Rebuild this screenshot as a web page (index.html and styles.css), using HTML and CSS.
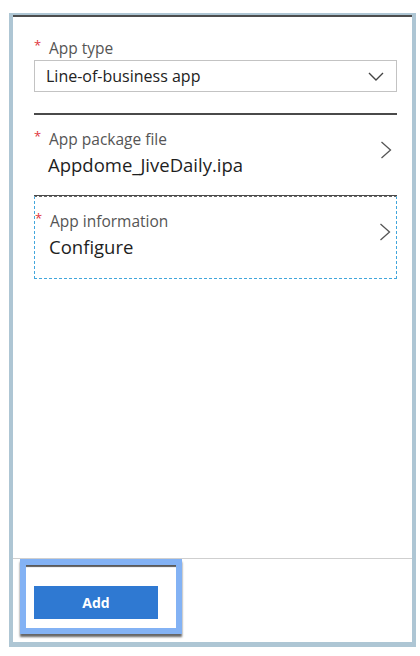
FILE: index.html
```html
<!DOCTYPE html>
<html lang="en">
<head>
    <meta charset="UTF-8">
    <title>Add app</title>
    <link rel="stylesheet" href="styles.css">
</head>
<body>
    <div class="frame">
        <div class="panel">
            <div class="form">
                <div class="field">
                    <label class="label"><span class="req">*</span>App type</label>
                    <div class="select">
                        <span>Line-of-business app</span>
                        <svg class="caret" width="16" height="9" viewBox="0 0 16 9"><path d="M1 1l7 7 7-7" fill="none" stroke="#444" stroke-width="1.4"/></svg>
                    </div>
                </div>

                <div class="item first">
                    <div class="item-text">
                        <div class="label"><span class="req">*</span>App package file</div>
                        <div class="value">Appdome_JiveDaily.ipa</div>
                    </div>
                    <svg class="chev" width="12" height="18" viewBox="0 0 12 18"><path d="M1.5 1l9 8-9 8" fill="none" stroke="#555" stroke-width="1.3"/></svg>
                </div>

                <div class="item focused">
                    <div class="item-text">
                        <div class="label"><span class="req">*</span>App information</div>
                        <div class="value">Configure</div>
                    </div>
                    <svg class="chev" width="12" height="18" viewBox="0 0 12 18"><path d="M1.5 1l9 8-9 8" fill="none" stroke="#555" stroke-width="1.3"/></svg>
                </div>
            </div>

            <div class="footer">
                <div class="highlight">
                    <button class="btn" type="button">Add</button>
                </div>
            </div>
        </div>
    </div>
</body>
</html>
```

FILE: styles.css
```css
body {
    margin: 0;
    background-color: white;
    font-family: 'Open Sans', 'Noto Sans', sans-serif;
    color: #222;
}

.frame {
    width: 399px;
    height: 627px;
    margin: 13px 0 0 9px;
    border: 4px solid #aec6d4;
    border-top-width: 2px;
    border-bottom-width: 5px;
}

.panel {
    height: 625px;
    border-top: 2px solid #4d4d4d;
    display: flex;
    flex-direction: column;
    background-color: white;
}

.form {
    flex: 1;
    padding: 21px 15px 0 21px;
}

.label {
    display: block;
    font-size: 15.5px;
    line-height: 20px;
    color: #555;
    height: 20px;
    white-space: nowrap;
}

.req {
    color: #e0353d;
    font-size: 13px;
    display: inline-block;
    width: 15px;
    vertical-align: top;
    line-height: 14px;
}

.select {
    margin-top: 2px;
    height: 30px;
    border: 1px solid #c3c3c3;
    display: flex;
    align-items: center;
    justify-content: space-between;
    padding: 0 12px 0 11px;
    font-size: 16px;
    color: #222;
}

.item {
    display: flex;
    align-items: flex-start;
    justify-content: space-between;
    box-sizing: border-box;
    padding: 14px 5px 18px 0;
}

.item.first {
    margin-top: 21px;
    border-top: 2px solid #4a4a4a;
    border-bottom: 1px solid #4a4a4a;
}

.item.focused {
    padding-bottom: 19px;
    border: 1px dashed #42a6dc;
    border-top-color: #666;
}

.item-text {
    display: flex;
    flex-direction: column;
    gap: 4px;
}

.value {
    font-size: 18.5px;
    line-height: 24px;
    padding-left: 14px;
    color: #1e1e1e;
    white-space: nowrap;
}

.chev {
    margin-top: 12px;
}

.footer {
    height: 84px;
    border-top: 1px solid #cfcfcf;
    box-sizing: border-box;
    padding: 0 0 0 7px;
}

.highlight {
    border: 6px solid #83b2f4;
    background-color: white;
    box-shadow: inset 0 3px 1px -1px #5a5a5a, 0 3px 2px #666;
    padding: 21px 0 0 8px;
    width: 142px;
    height: 42px;
}

.btn {
    display: block;
    width: 124px;
    height: 33px;
    border: none;
    background-color: #2f79d2;
    color: white;
    font-family: 'Open Sans', sans-serif;
    font-weight: bold;
    font-size: 14px;
    cursor: pointer;
}
```
